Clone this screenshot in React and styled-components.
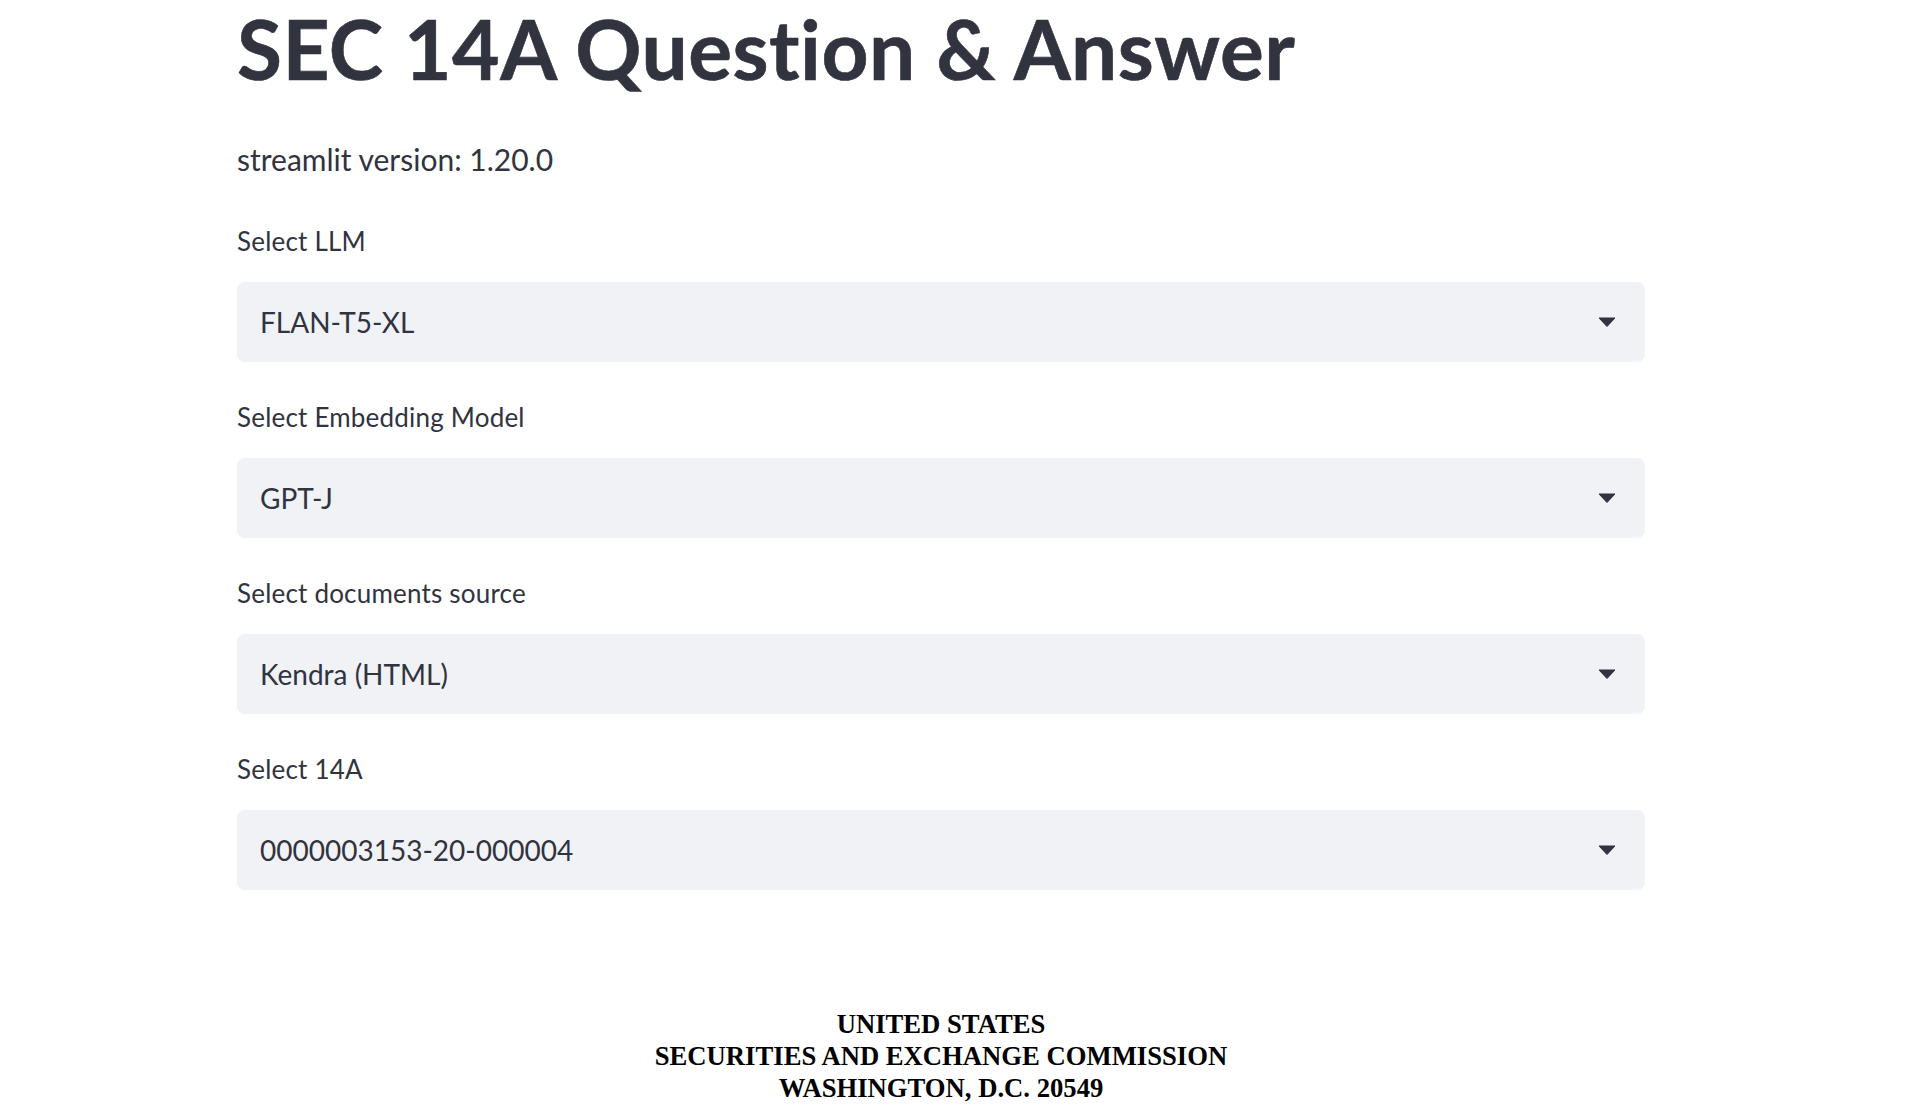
import React from 'react';
import styled, { createGlobalStyle } from 'styled-components';

const GlobalStyle = createGlobalStyle`
  html, body {
    margin: 0;
    padding: 0;
    background: #ffffff;
  }
  body {
    font-family: Lato, "Noto Sans", sans-serif;
    color: #31333f;
  }
`;

const Main = styled.main`
  width: 1408px;
  margin-left: 237px;
  display: flex;
  flex-direction: column;
`;

const Title = styled.h1`
  margin: 0;
  font-size: 82px;
  line-height: 96px;
  font-weight: 700;
  letter-spacing: 0.5px;
  color: #31333f;
  -webkit-text-stroke: 0.6px #31333f;
`;

const Caption = styled.p`
  margin: 43px 0 44px;
  font-size: 30px;
  line-height: 40px;
`;

const Fields = styled.div`
  display: flex;
  flex-direction: column;
  gap: 37px;
`;

const Field = styled.div`
  display: flex;
  flex-direction: column;
`;

const Label = styled.label`
  font-size: 26px;
  line-height: 36px;
  margin-bottom: 23px;
  letter-spacing: 0.2px;
`;

const SelectBox = styled.div`
  height: 80px;
  box-sizing: border-box;
  background: #f0f2f6;
  border-radius: 8px;
  display: flex;
  align-items: center;
  justify-content: space-between;
  padding: 0 29px 0 23px;
  font-size: 28px;
  cursor: pointer;
`;

const Arrow = styled.svg`
  width: 18px;
  height: 10px;
  fill: #31333f;
`;

const Document = styled.section`
  margin-top: 118px;
  text-align: center;
  font-family: "Liberation Serif", "Times New Roman", serif;
  font-weight: 700;
  font-size: 26.67px;
  line-height: 32px;
  color: #000000;
`;

const Select = ({ label, value }) => (
  <Field>
    <Label>{label}</Label>
    <SelectBox>
      <span>{value}</span>
      <Arrow viewBox="0 0 18 10">
        <path d="M1 1 H17 L9 9.5 Z" strokeLinejoin="round" stroke="#31333f" strokeWidth="1" />
      </Arrow>
    </SelectBox>
  </Field>
);

const fields = [
  { label: 'Select LLM', value: 'FLAN-T5-XL' },
  { label: 'Select Embedding Model', value: 'GPT-J' },
  { label: 'Select documents source', value: 'Kendra (HTML)' },
  { label: 'Select 14A', value: '0000003153-20-000004' },
];

const App = () => (
  <>
    <GlobalStyle />
    <Main>
      <Title>SEC 14A Question &amp; Answer</Title>
      <Caption>streamlit version: 1.20.0</Caption>
      <Fields>
        {fields.map((f) => (
          <Select key={f.label} label={f.label} value={f.value} />
        ))}
      </Fields>
      <Document>
        UNITED STATES
        <br />
        SECURITIES AND EXCHANGE COMMISSION
        <br />
        WASHINGTON, D.C. 20549
      </Document>
    </Main>
  </>
);

export default App;
